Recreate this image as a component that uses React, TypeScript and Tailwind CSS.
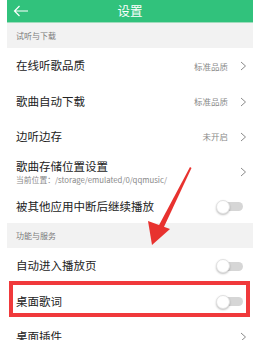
import React from "react";

const font = { fontFamily: '"Noto Sans CJK SC", "Noto Sans", sans-serif' };

function Chevron() {
  return (
    <svg width="7" height="10" viewBox="0 0 7 10" className="shrink-0">
      <polyline points="1,1 5.5,5 1,9" fill="none" stroke="#8a8a8a" strokeWidth="1" />
    </svg>
  );
}

function Toggle() {
  return (
    <div className="relative w-[28px] h-[14px] shrink-0 mr-[3px]">
      <div className="absolute left-[5px] top-[2.5px] w-[22px] h-[9px] rounded-full bg-[#d6d6d6]" />
      <div className="absolute left-0 top-0 w-[14px] h-[14px] rounded-full bg-white border border-[#e2e2e2] shadow-[0_1px_2px_rgba(0,0,0,0.25)]" />
    </div>
  );
}

function Section({ title }: { title: string }) {
  return (
    <div className="h-[25px] bg-[#f2f2f2] flex items-center pl-[9px] text-[8px] text-[#7a7a7a]">
      {title}
    </div>
  );
}

function Row({ title, value, chevron, toggle, h = 35 }: { title: string; value?: string; chevron?: boolean; toggle?: boolean; h?: number }) {
  return (
    <div className="flex items-center pl-[9px] pr-[6px]" style={{ height: h }}>
      <div className="flex-1 text-[11.5px] text-[#222]">{title}</div>
      {value && <div className="text-[8.5px] text-[#8a8a8a] mr-[12px]">{value}</div>}
      {chevron && <Chevron />}
      {toggle && <Toggle />}
    </div>
  );
}

export default function App() {
  return (
    <div className="w-[260px] h-[340px] bg-white overflow-hidden relative" style={font}>
      <div className="mx-[7px]">
        <div className="h-[23px] bg-[#31c27c] border-b border-[#9fdcbc] flex items-center relative">
          <svg width="16" height="12" viewBox="0 0 16 12" className="absolute left-[6px] top-[5px]">
            <path d="M15 6 H1.5 M6.5 1 L1.5 6 L6.5 11" fill="none" stroke="#ffffff" strokeWidth="1.2" />
          </svg>
          <div className="flex-1 text-center text-white text-[12.5px]">设置</div>
        </div>
        <Section title="试听与下载" />
        <Row title="在线听歌品质" value="标准品质" chevron h={36} />
        <Row title="歌曲自动下载" value="标准品质" chevron h={35} />
        <Row title="边听边存" value="未开启" chevron h={35} />
        <div className="h-[36px] flex items-center pl-[9px] pr-[6px]">
          <div className="flex-1 flex flex-col">
            <div className="text-[11.5px] text-[#222] leading-[15px]">歌曲存储位置设置</div>
            <div className="text-[7.8px] text-[#8a8a8a] leading-[11px]">当前位置：/storage/emulated/0/qqmusic/</div>
          </div>
          <Chevron />
        </div>
        <Row title="被其他应用中断后继续播放" toggle h={33} />
        <Section title="功能与服务" />
        <Row title="自动进入播放页" toggle h={36} />
        <Row title="桌面歌词" toggle h={35} />
        <Row title="桌面插件" chevron h={35} />
      </div>
      <div className="absolute left-[9px] top-[281px] w-[241px] h-[36px] border-[4px] border-[#f0393b]" />
      <svg className="absolute left-0 top-0 pointer-events-none" width="260" height="340" viewBox="0 0 260 340">
        <polygon points="190,167 191.5,168 163,229 158,227" fill="#e8322f" />
        <polygon points="170,229 152,245 148,221" fill="#e8322f" />
      </svg>
    </div>
  );
}
